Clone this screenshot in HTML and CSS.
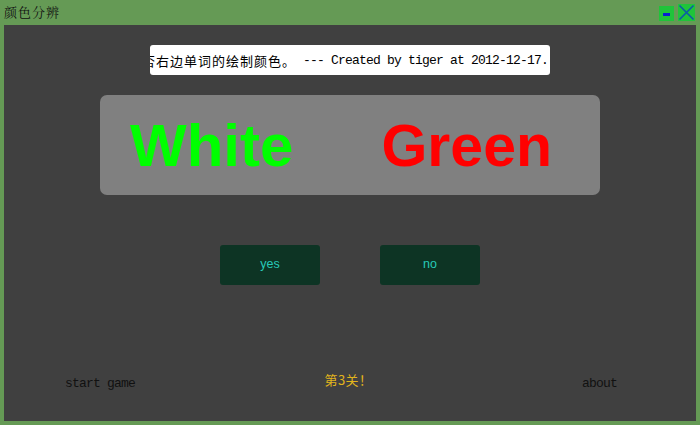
FILE: index.html
```html
<!DOCTYPE html>
<html>
<head>
<meta charset="utf-8">
<link rel="stylesheet" href="styles.css">
</head>
<body>
<div class="window">
  <div class="titlebar">
    <span class="title">颜色分辨</span>
    <div class="controls">
      <svg class="ctl" width="15" height="15" viewBox="0 0 15 15"><rect width="15" height="15" fill="#1fc43a"/><rect x="4" y="7" width="7" height="3" fill="#0a1fd0"/></svg>
      <svg class="ctl" width="17" height="17" viewBox="0 0 17 17"><rect width="17" height="17" fill="#1fc43a"/><path d="M1.5 1.5 L15.5 15.5 M15.5 1.5 L1.5 15.5" stroke="#0b5aa8" stroke-width="1.6"/></svg>
    </div>
  </div>
  <div class="content">
    <div class="tip"><span class="cjk">请判断左边单词的意思是否右边单词的绘制颜色。</span><span class="lat">&nbsp;--- Created by tiger at 2012-12-17.</span></div>
    <div class="panel">
      <span class="word green">White</span>
      <span class="word red">Green</span>
    </div>
    <div class="buttons">
      <div class="btn">yes</div>
      <div class="btn">no</div>
    </div>
    <div class="spacer"></div>
    <div class="footer">
      <span class="link left">start game</span>
      <span class="level">第3关！</span>
      <span class="link right">about</span>
    </div>
  </div>
</div>
</body>
</html>
```
FILE: styles.css
```css
html, body { margin: 0; padding: 0; }
body { width: 700px; height: 425px; overflow: hidden; }
.window {
  width: 700px; height: 425px; background: #659a55;
  display: flex; flex-direction: column; box-sizing: border-box;
  padding: 0 4px 4px 4px;
}
.titlebar {
  height: 25px; display: flex; align-items: flex-start; justify-content: space-between;
}
.title {
  font-family: "AR PL UKai CN", "Noto Serif CJK SC", "Noto Sans CJK SC", serif;
  font-size: 13px; color: #111; margin-top: 2px; letter-spacing: 1px;
}
.controls { display: flex; align-items: flex-start; gap: 4px; margin-top: 4px; margin-right: 1px; }
.controls .ctl:first-child { margin-top: 2px; }
.content {
  flex: 1; background: #404040; display: flex; flex-direction: column; align-items: center;
}
.tip {
  margin-top: 20px; width: 400px; height: 30px; background: #fff; border-radius: 3px;
  display: flex; justify-content: flex-end; align-items: center; overflow: hidden;
  white-space: nowrap; color: #000; padding-right: 2px; box-sizing: border-box;
}
.tip .cjk { font-family: "Noto Sans CJK SC", sans-serif; font-size: 13px; letter-spacing: 1px; flex-shrink: 0; }
.tip .lat { font-family: "Liberation Mono", monospace; font-size: 13px; letter-spacing: -0.8px; flex-shrink: 0; }
.panel {
  margin-top: 20px; width: 500px; height: 100px; background: #808080; border-radius: 7px;
  display: flex; align-items: center; justify-content: space-between;
  padding: 0 48px 0 30px; box-sizing: border-box;
}
.word { font-family: "Liberation Sans", Arial, sans-serif; font-weight: bold; font-size: 60px; line-height: 1; margin-top: 2px; }
.word.green { color: #00ff00; }
.word.red { color: #ff0000; font-size: 59px; }
.buttons { margin-top: 50px; display: flex; gap: 60px; }
.btn {
  width: 100px; height: 40px; background: #0d3424; border-radius: 3px;
  display: flex; align-items: center; justify-content: center;
  font-family: "Liberation Sans", Arial, sans-serif; font-size: 12.5px; color: #27c9b8; padding-bottom: 2px; box-sizing: border-box;
}
.spacer { flex: 1; }
.footer {
  width: 100%; display: grid; grid-template-columns: 1fr auto 1fr; align-items: center;
  margin-bottom: 30px;
}
.link { font-family: "Liberation Mono", monospace; font-size: 13px; letter-spacing: -0.8px; color: #111; }
.link.left { justify-self: start; margin-left: 61px; }
.link.right { justify-self: end; margin-right: 79px; }
.level { font-family: "Noto Sans CJK SC", sans-serif; font-size: 13px; letter-spacing: 0.5px; color: #e2b51c; margin-top: -9px; margin-left: -3px; }
```
